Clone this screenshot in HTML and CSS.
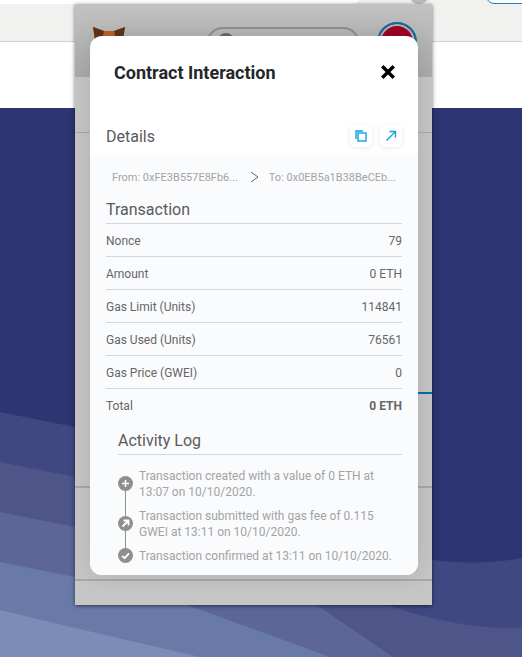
FILE: index.html
```html
<!DOCTYPE html>
<html lang="en">

<head>
    <meta charset="UTF-8">
    <title>Contract Interaction</title>
    <link rel="stylesheet" href="styles.css">
</head>

<body>
    <div class="page">
        <div class="browser-top">
            <div class="omnibox"></div>
            <div class="top-dot"></div>
            <div class="top-ring"></div>
        </div>
        <div class="toolbar"></div>
        <div class="white-band"></div>
        <svg class="waves" width="522" height="549" viewBox="0 108 522 549">
            <rect x="0" y="108" width="522" height="549" fill="#2d3673" />
            <path d="M0 412 L75 427 Q300 530 432 560 Q480 566 522 558 V657 H0 Z" fill="#3f4881" />
            <path d="M0 462 L75 477 L387 605 Q460 630 522 628 V657 H0 Z" fill="#4d5589" />
            <path d="M0 512 L75 527 L317 605 L393 657 H0 Z" fill="#5c6697" />
            <path d="M0 562 L75 577 L187 605 L330 657 H0 Z" fill="#6a7aa8" />
            <path d="M0 610 L75 628 L200 657 H0 Z" fill="#7c8cb6" />
        </svg>

        <!-- extension popup -->
        <div class="popup">
            <div class="popup-header">
                <svg class="fox" width="34" height="30" viewBox="0 0 34 30">
                    <path d="M1 1 L12 5 H22 L33 1 L31 14 L17 26 L3 14 Z" fill="#b9622a" />
                    <path d="M1 1 L12 5 L9 18 L3 14 Z" fill="#5f3418" />
                    <path d="M33 1 L22 5 L25 18 L31 14 Z" fill="#5f3418" />
                </svg>
                <div class="network-pill"><span class="network-dot"></span></div>
                <div class="avatar"></div>
            </div>
            <div class="popup-rule rule-a"></div>
            <div class="popup-rule rule-blue"></div>
            <div class="popup-rule rule-b"></div>
            <div class="popup-rule rule-c"></div>
        </div>

        <!-- details modal -->
        <div class="modal">
            <div class="modal-title">
                <h1>Contract Interaction</h1>
                <svg width="16" height="16" viewBox="0 0 14 14">
                    <path d="M2 2 L12 12 M12 2 L2 12" stroke="#000" stroke-width="3" />
                </svg>
            </div>
            <div class="details-head">
                <h2>Details</h2>
                <div class="details-actions">
                    <button class="icon-btn">
                        <svg width="12" height="12" viewBox="0 0 12 12" fill="none" stroke="#12a0e0" stroke-width="1.4">
                            <path d="M1 9 V1 H8" />
                            <rect x="3" y="3" width="8" height="8" />
                        </svg>
                    </button>
                    <button class="icon-btn">
                        <svg width="12" height="12" viewBox="0 0 12 12" fill="none" stroke="#12a0e0" stroke-width="1.4">
                            <path d="M1.5 10.5 L10.5 1.5 M4.5 1.5 H10.5 V7.5" />
                        </svg>
                    </button>
                </div>
            </div>
            <div class="modal-body">
                <div class="addresses">
                    <span class="address">From: 0xFE3B557E8Fb6...</span>
                    <svg class="chevron" width="9" height="12" viewBox="0 0 9 12" fill="none" stroke="#666" stroke-width="1">
                        <path d="M1 1 L8 6 L1 11" />
                    </svg>
                    <span class="address">To: 0x0EB5a1B38BeCEb...</span>
                </div>

                <h3 class="section-title">Transaction</h3>
                <div class="row"><span>Nonce</span><span>79</span></div>
                <div class="row"><span>Amount</span><span>0 ETH</span></div>
                <div class="row"><span>Gas Limit (Units)</span><span>114841</span></div>
                <div class="row"><span>Gas Used (Units)</span><span>76561</span></div>
                <div class="row"><span>Gas Price (GWEI)</span><span>0</span></div>
                <div class="row row-total"><span>Total</span><span class="total-value">0 ETH</span></div>

                <div class="activity">
                    <h3 class="section-title">Activity Log</h3>
                    <div class="log">
                        <div class="log-item">
                            <svg class="log-icon" width="15" height="15" viewBox="0 0 15 15">
                                <circle cx="7.5" cy="7.5" r="7.5" fill="#8f8f8f" />
                                <path d="M7.5 4 V11 M4 7.5 H11" stroke="#fff" stroke-width="1.6" />
                            </svg>
                            <p>Transaction created with a value of 0 ETH at 13:07 on 10/10/2020.</p>
                        </div>
                        <div class="log-item">
                            <svg class="log-icon" width="15" height="15" viewBox="0 0 15 15">
                                <circle cx="7.5" cy="7.5" r="7.5" fill="#8f8f8f" />
                                <path d="M4.5 10.5 L10 5 M5.5 4.5 H10.5 V9.5" stroke="#fff" stroke-width="1.8" fill="none" />
                            </svg>
                            <p>Transaction submitted with gas fee of 0.115 GWEI at 13:11 on 10/10/2020.</p>
                        </div>
                        <div class="log-item">
                            <svg class="log-icon" width="15" height="15" viewBox="0 0 15 15">
                                <circle cx="7.5" cy="7.5" r="7.5" fill="#8f8f8f" />
                                <path d="M4 7.8 L6.6 10.2 L11 5.4" stroke="#fff" stroke-width="1.8" fill="none" />
                            </svg>
                            <p>Transaction confirmed at 13:11 on 10/10/2020.</p>
                        </div>
                    </div>
                </div>
            </div>
        </div>
    </div>
</body>

</html>
```

FILE: styles.css
```css
* {
    box-sizing: border-box;
}

body {
    margin: 0;
    font-family: Roboto, "Liberation Sans", sans-serif;
}

.page {
    position: relative;
    width: 522px;
    height: 657px;
    overflow: hidden;
    background-color: #2d3673;
}

.browser-top {
    position: relative;
    height: 4px;
    background-color: #f1f1f0;
    overflow: hidden;
}

.omnibox {
    position: absolute;
    left: 0;
    top: -12px;
    width: 360px;
    height: 16px;
    background-color: #fff;
    border-radius: 0 0 8px 0;
}

.top-dot {
    position: absolute;
    left: 410px;
    top: -10px;
    width: 18px;
    height: 14px;
    border-radius: 50%;
    background-color: #bdbdbd;
}

.top-ring {
    position: absolute;
    left: 486px;
    top: -12px;
    width: 60px;
    height: 16px;
    border: 1px solid #1c7fc4;
    border-radius: 8px;
    background-color: #fff;
}

.toolbar {
    height: 38px;
    background-color: #f1f1f0;
    border-bottom: 1px solid #d2d2d2;
}

.white-band {
    height: 66px;
    background-color: #fff;
}

.waves {
    display: block;
}

.popup {
    position: absolute;
    left: 75px;
    top: 4px;
    width: 357px;
    height: 601px;
    background-color: #c6c6c6;
    box-shadow: 0 1px 4px rgba(0, 0, 0, .55);
}

.popup-header {
    display: flex;
    align-items: flex-start;
    height: 73px;
    padding: 22px 15px 0 17px;
    background: linear-gradient(#c2c2c2, #a9aaab);
}

.fox {
    flex-shrink: 0;
}

.network-pill {
    width: 154px;
    height: 34px;
    margin: 1px 0 0 80px;
    padding: 4px 10px;
    border: 2px solid #8e8f91;
    border-radius: 17px;
}

.network-dot {
    display: block;
    width: 16px;
    height: 16px;
    border-radius: 50%;
    background-color: #5e6a75;
}

.avatar {
    width: 40px;
    height: 40px;
    margin: -4px 0 0 auto;
    border: 2px solid #0f6ea8;
    border-radius: 50%;
    background-color: #9c0324;
    box-shadow: inset 0 0 0 2px #b5b5b5;
}

.popup-rule {
    position: absolute;
    left: 0;
    right: 0;
    height: 1px;
    background-color: #a8a8a8;
}

.rule-a {
    top: 128px;
}

.rule-blue {
    top: 388px;
    left: 340px;
    height: 2px;
    background-color: #0a6aa3;
}

.rule-b {
    top: 482px;
    height: 2px;
}

.rule-c {
    top: 575px;
    height: 2px;
}

.modal {
    position: absolute;
    left: 90px;
    top: 36px;
    width: 328px;
    height: 539px;
    display: flex;
    flex-direction: column;
    background-color: #fff;
    border-radius: 12px;
    overflow: hidden;
    box-shadow: 0 0 24px rgba(0, 0, 0, .12);
}

.modal-title {
    display: flex;
    align-items: center;
    justify-content: space-between;
    height: 72px;
    padding: 0 22px 0 24px;
}

.modal-title h1 {
    margin: 0;
    font-size: 18px;
    font-weight: 700;
    color: #24272a;
}

.details-head {
    display: flex;
    align-items: center;
    justify-content: space-between;
    height: 47px;
    padding: 9px 16px 0;
}

.details-head h2 {
    margin: 0;
    font-size: 16px;
    font-weight: 400;
    color: #5a5a5a;
}

.details-actions {
    display: flex;
    gap: 8px;
}

.icon-btn {
    display: flex;
    align-items: center;
    justify-content: center;
    width: 22px;
    height: 22px;
    padding: 0;
    border: 0;
    border-radius: 6px;
    background-color: #fff;
    box-shadow: 0 1px 5px rgba(0, 0, 0, .09);
}

.modal-body {
    flex-grow: 1;
    padding: 0 16px;
    background-color: #fafbfd;
}

.addresses {
    display: flex;
    align-items: center;
    height: 44px;
    padding: 0 6px;
    font-size: 11px;
    color: #a3a3a3;
}

.address {
    white-space: nowrap;
}

.chevron {
    margin: 0 auto 0 12px;
    flex-shrink: 0;
}

.section-title {
    margin: 0;
    height: 25px;
    font-size: 16px;
    line-height: 20px;
    font-weight: 400;
    padding-top: 1px;
    color: #5a5a5a;
    border-bottom: 1px solid #d2d8dd;
}

.row {
    display: flex;
    align-items: center;
    justify-content: space-between;
    height: 33px;
    padding-top: 2px;
    font-size: 12px;
    color: #666;
    border-bottom: 1px solid #d2d8dd;
}

.row-total {
    padding-top: 0;
    border-bottom: 0;
}

.total-value {
    font-weight: 700;
}

.activity {
    padding: 8px 0 0 12px;
}

.log {
    position: relative;
    padding-top: 13px;
}

.log::before {
    content: "";
    position: absolute;
    left: 7px;
    top: 26px;
    bottom: 8px;
    width: 1px;
    background-color: #8f8f8f;
}

.log-item {
    position: relative;
    display: flex;
    align-items: center;
    gap: 6px;
    margin-bottom: 8px;
}

.log-icon {
    flex-shrink: 0;
    margin-top: -2px;
}

.log-item p {
    margin: 0;
    font-size: 12px;
    line-height: 16px;
    color: #a3a3a3;
}
```
